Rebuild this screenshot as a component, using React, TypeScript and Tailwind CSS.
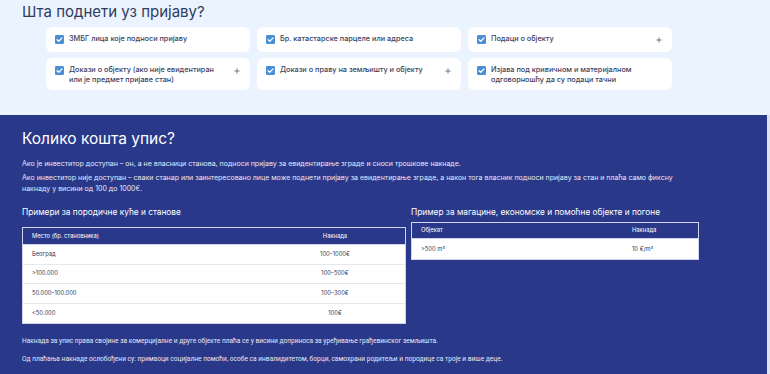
import { Plus } from "lucide-react";

const items = [
  { text: "ЗМБГ лица које подноси пријаву", plus: false },
  { text: "Бр. катастарске парцеле или адреса", plus: false },
  { text: "Подаци о објекту", plus: true },
  { text: "Докази о објекту (ако није евидентиран или је предмет пријаве стан)", plus: true },
  { text: "Докази о праву на земљишту и објекту", plus: true },
  { text: "Изјава под кривичном и материјалном одговорношћу да су подаци тачни", plus: false },
];

const homes = [
  ["Београд", "100–1000€"],
  [">100.000", "100–500€"],
  ["50.000–100.000", "100–300€"],
  ["<50.000", "100€"],
];

function Check() {
  return (
    <svg viewBox="0 0 10 10" className="w-[9px] h-[9px] shrink-0 mt-[1px]">
      <rect width="10" height="10" rx="1.5" fill="#4a8fd6" />
      <path d="M2.3 5.2 4.2 7 7.8 3.2" fill="none" stroke="#fff" strokeWidth="1.4" strokeLinecap="round" strokeLinejoin="round" />
    </svg>
  );
}

export default function App() {
  return (
    <div className="w-[770px] h-[374px] overflow-hidden flex flex-col bg-[#eaf3fe] font-['Inter',sans-serif]">
      {/* What to submit */}
      <section className="h-[115px] shrink-0 pl-[22px] pt-[2px]">
        <h2 className="text-[15px] leading-[20px] text-[#2f3b5f]">Шта поднети уз пријаву?</h2>
        <div className="ml-[24px] mt-[5px] grid grid-cols-[204px_204px_204px] grid-rows-[25px_32px] gap-x-[7px] gap-y-[6px]">
          {items.map((it) => (
            <div key={it.text} className="bg-white rounded-[6px] flex items-start gap-[5px] pl-[9px] pr-[9px] pt-[7px]">
              <Check />
              <p className="flex-1 text-[7.3px] leading-[10px] font-medium text-[#3a4262] pr-[14px]">{it.text}</p>
              {it.plus && <Plus className="w-[8px] h-[8px] text-[#3a4262] mt-[2px]" strokeWidth={2} />}
            </div>
          ))}
        </div>
      </section>

      {/* Cost */}
      <section className="flex-1 bg-[#2a388a] border-r-[3px] border-[#dfe3ee] text-white pl-[22px] pt-[13px]">
        <h2 className="text-[15.5px] leading-[22px]">Колико кошта упис?</h2>
        <div className="mt-[8px] text-[7px] leading-[11px] text-[#e6e9f5]">
          <p className="mb-[3px]">Ако је инвеститор доступан – он, а не власници станова, подноси пријаву за евидентирање зграде и сноси трошкове накнаде.</p>
          <p className="w-[666px]">Ако инвеститор није доступан – сваки станар или заинтересовано лице може поднети пријаву за евидентирање зграде, а након тога власник подноси пријаву за стан и плаћа само фиксну накнаду у висини од 100 до 1000€.</p>
        </div>

        <div className="flex mt-[12px]">
          <div className="w-[384px] shrink-0">
            <h3 className="text-[8.3px] leading-[12px] mb-[9px]">Примери за породичне куће и станове</h3>
            <div className="border border-[#cfd5ee] text-[5.8px]">
              <div className="flex h-[17px] items-center border-b border-[#cfd5ee]">
                <div className="flex-1 pl-[9px]">Место (бр. становника)</div>
                <div className="w-[140px] text-center">Накнада</div>
              </div>
              {homes.map(([a, b], i) => (
                <div key={a} className={`flex h-[19.5px] items-center bg-white text-[#333a55] ${i < homes.length - 1 ? "border-b border-[#e6e8ee]" : ""}`}>
                  <div className="flex-1 pl-[9px]">{a}</div>
                  <div className="w-[140px] text-center">{b}</div>
                </div>
              ))}
            </div>
          </div>

          <div className="ml-[5px] w-[288px] shrink-0">
            <h3 className="text-[8.3px] leading-[12px] mb-[4px]">Пример за магацине, економске и помоћне објекте и погоне</h3>
            <div className="border border-[#cfd5ee] text-[5.8px]">
              <div className="flex h-[16px] items-center border-b border-[#cfd5ee]">
                <div className="flex-1 pl-[9px]">Објекат</div>
                <div className="w-[66px]">Накнада</div>
              </div>
              <div className="flex h-[20px] items-center bg-white text-[#333a55]">
                <div className="flex-1 pl-[9px]">&gt;500 m²</div>
                <div className="w-[66px]">10 €/m²</div>
              </div>
            </div>
          </div>
        </div>

        <div className="mt-[13px] text-[6.6px] leading-[9px] text-[#e6e9f5] font-['Roboto',sans-serif]">
          <p className="mb-[9px]">Накнада за упис права својине за комерцијалне и друге објекте плаћа се у висини доприноса за уређивање грађевинског земљишта.</p>
          <p>Од плаћања накнаде ослобођени су: примаоци социјалне помоћи, особе са инвалидитетом, борци, самохрани родитељи и породице са троје и више деце.</p>
        </div>
      </section>
    </div>
  );
}
